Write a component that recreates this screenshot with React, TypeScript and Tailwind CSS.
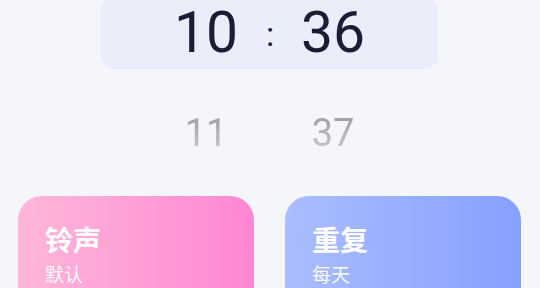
import React from "react";

export default function App() {
  return (
    <div className="w-[540px] h-[288px] overflow-hidden bg-[#f5f6fa] flex flex-col font-['Roboto','Noto_Sans_CJK_SC',sans-serif]">
      {/* selected row */}
      <div className="mt-[-4px] ml-[101px] w-[337px] h-[73px] shrink-0 rounded-[14px] bg-[#ecedfb] flex items-center pl-[55px] text-[#1e1c35]">
        <div className="w-[100px] text-center text-[57px] leading-none font-['Roboto',sans-serif]">10</div>
        <div className="w-[28px] text-center text-[34px] leading-none font-['Roboto',sans-serif] pt-[3px]">:</div>
        <div className="w-[98px] text-center text-[57px] leading-none font-['Roboto',sans-serif]">36</div>
      </div>
      {/* next row */}
      <div className="mt-[27px] ml-[101px] w-[337px] h-[73px] shrink-0 flex items-center pl-[55px]">
        <div className="w-[100px] text-center text-[38px] leading-none font-['Roboto',sans-serif] bg-gradient-to-b from-[#9c9ca2] to-[#c9c9cd] bg-clip-text text-transparent">11</div>
        <div className="w-[28px]" />
        <div className="w-[98px] text-center text-[38px] leading-none font-['Roboto',sans-serif] bg-gradient-to-b from-[#9c9ca2] to-[#c9c9cd] bg-clip-text text-transparent">37</div>
      </div>
      {/* cards */}
      <div className="mt-[27px] px-[18px] flex gap-[31px] shrink-0">
        <div className="w-[236px] h-[120px] rounded-[24px] bg-gradient-to-r from-[#ffb6d9] to-[#ff86d3] pl-[27px] pt-[29px] text-white">
          <div className="text-[28px] leading-none font-bold font-['Noto_Sans_CJK_SC',sans-serif]">铃声</div>
          <div className="mt-[11px] text-[19px] leading-none text-white/95 font-['Noto_Sans_CJK_SC',sans-serif]">默认</div>
        </div>
        <div className="w-[236px] h-[120px] rounded-[24px] bg-gradient-to-r from-[#abbdff] to-[#86a0ff] pl-[27px] pt-[29px] text-white">
          <div className="text-[28px] leading-none font-bold font-['Noto_Sans_CJK_SC',sans-serif]">重复</div>
          <div className="mt-[11px] text-[19px] leading-none text-white/95 font-['Noto_Sans_CJK_SC',sans-serif]">每天</div>
        </div>
      </div>
    </div>
  );
}
